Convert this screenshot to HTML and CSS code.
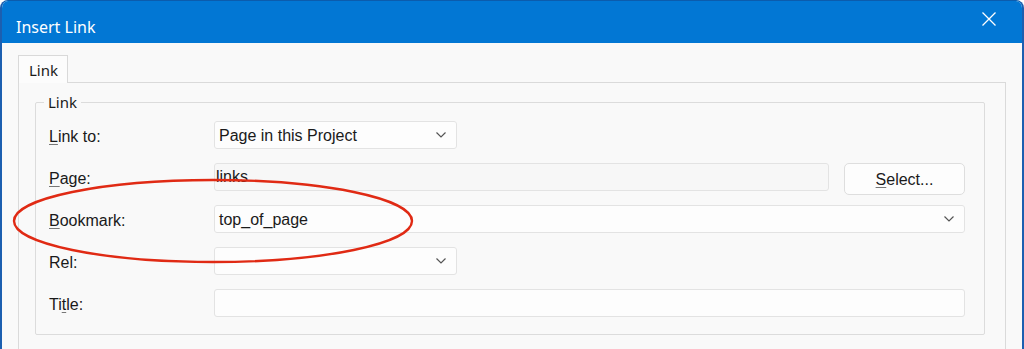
FILE: index.html
```html
<!DOCTYPE html>
<html>
<head>
    <title>Insert Link</title>
    <link rel="stylesheet" href="styles.css">
</head>
<body>
    <div class="window">
        <div class="titlebar">
            <span class="title">Insert Link</span>
            <svg class="close" width="14" height="14" viewBox="0 0 14 14">
                <path d="M0.5 0.5 L13.5 13.5 M13.5 0.5 L0.5 13.5" stroke="#fff" stroke-width="1.3" fill="none"/>
            </svg>
        </div>

        <div class="content">
            <div class="tabs">
                <div class="tab">Link</div>
            </div>
            <div class="panel">
                <fieldset class="group">
                    <legend>Link</legend>
                    <div class="form">
                        <label><u>L</u>ink to:</label>
                        <div class="control">
                            <div class="select short">
                                <span>Page in this Project</span>
                                <svg class="chevron" width="10" height="6" viewBox="0 0 10 6"><path d="M0.5 0.5 L5 5 L9.5 0.5" stroke="#555" stroke-width="1.2" fill="none"/></svg>
                            </div>
                        </div>

                        <label><u>P</u>age:</label>
                        <div class="control split">
                            <div class="input readonly">links</div>
                            <button class="button"><u>S</u>elect...</button>
                        </div>

                        <label><u>B</u>ookmark:</label>
                        <div class="control">
                            <div class="select">
                                <span>top_of_page</span>
                                <svg class="chevron" width="10" height="6" viewBox="0 0 10 6"><path d="M0.5 0.5 L5 5 L9.5 0.5" stroke="#555" stroke-width="1.2" fill="none"/></svg>
                            </div>
                        </div>

                        <label>Rel:</label>
                        <div class="control">
                            <div class="select short">
                                <span></span>
                                <svg class="chevron" width="10" height="6" viewBox="0 0 10 6"><path d="M0.5 0.5 L5 5 L9.5 0.5" stroke="#555" stroke-width="1.2" fill="none"/></svg>
                            </div>
                        </div>

                        <label>Ti<u>t</u>le:</label>
                        <div class="control">
                            <div class="input"></div>
                        </div>
                    </div>
                </fieldset>
            </div>
        </div>

        <!-- annotation drawn over the dialog -->
        <svg class="mark" width="430" height="100" viewBox="0 0 430 100">
            <ellipse cx="213" cy="50" rx="199" ry="41" stroke="#e02a14" stroke-width="2.4" fill="none"/>
        </svg>
    </div>
</body>
</html>
```

FILE: styles.css
```css
html, body {
    margin: 0;
    padding: 0;
    background: #ffffff;
    overflow: hidden;
}
body {
    width: 1024px;
    height: 349px;
    font-family: 'Liberation Sans', Arial, sans-serif;
    font-size: 16px;
    color: #1a1a1a;
}
.window {
    position: relative;
    box-sizing: border-box;
    width: 1024px;
    height: 360px;
    background: #f9f9f9;
    border-left: 2px solid #1c5fb0;
    border-right: 2px solid #1c5fb0;
    border-top: 1px solid #0b5cad;
    border-radius: 8px 8px 0 0;
    overflow: hidden;
}
.titlebar {
    display: flex;
    justify-content: space-between;
    align-items: flex-start;
    height: 42px;
    background: #0277d4;
    color: #ffffff;
}
.title {
    font-family: 'Noto Sans', 'Open Sans', sans-serif;
    font-size: 16px;
    line-height: 20px;
    margin: 16px 0 0 14px;
}
.close {
    margin: 11px 26px 0 0;
}
.content {
    padding: 12px 16px 0 16px;
}
.tabs {
    display: flex;
}
.tab {
    box-sizing: border-box;
    width: 50px;
    height: 28px;
    margin-bottom: -1px;
    padding: 1px 0 0 10px;
    border: 1px solid #d9d9d9;
    border-bottom: none;
    background: #fcfcfc;
    font-family: 'Noto Sans', 'Open Sans', sans-serif;
    font-size: 15px;
    line-height: 27px;
    position: relative;
}
.panel {
    border: 1px solid #dadada;
    border-bottom: none;
    padding: 10px 20px 20px 16px;
    height: 300px;
}
.group {
    margin: 0;
    padding: 10px 19px 17px 13px;
    border: 1px solid #dcdcdc;
    border-radius: 2px;
}
.group legend {
    font-family: 'Noto Sans', 'Open Sans', sans-serif;
    font-size: 15px;
    line-height: 18px;
    padding: 0 4px;
    margin-left: -5px;
}
.form {
    display: grid;
    grid-template-columns: 165px 1fr;
    grid-template-rows: repeat(5, 28px);
    row-gap: 14px;
}
.form label {
    display: flex;
    align-items: center;
    padding-top: 3px;
}
u {
    text-underline-offset: 2px;
    text-decoration-thickness: 1px;
    text-decoration-color: #777;
}
.control {
    display: flex;
    align-items: flex-start;
}
.split {
    gap: 15px;
}
.select, .input {
    box-sizing: border-box;
    height: 28px;
    border: 1px solid #e3e3e3;
    border-radius: 3px;
    background: #fdfdfd;
}
.select {
    display: flex;
    align-items: center;
    justify-content: space-between;
    flex: 1;
    padding: 2px 10px 0 4px;
}
.select .chevron {
    margin-top: -2px;
}
.select.short {
    flex: 0 0 243px;
}
.input {
    flex: 1;
    padding: 4px 0 0 1px;
    line-height: 18px;
}
.input.readonly {
    background: #f7f7f7;
}
.button {
    box-sizing: border-box;
    flex: 0 0 121px;
    height: 32px;
    border: 1px solid #dedede;
    border-radius: 5px;
    background: #fdfdfd;
    font-family: 'Liberation Sans', Arial, sans-serif;
    font-size: 16px;
    color: #1a1a1a;
    padding: 2px 0 0 0;
}
.mark {
    position: absolute;
    left: -2px;
    top: 170px;
}
```
